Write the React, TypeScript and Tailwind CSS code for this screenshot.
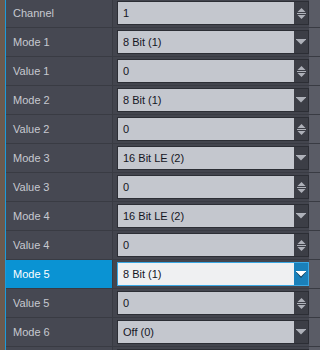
const rows: { label: string; value: string; kind: "spin" | "drop" }[] = [
  { label: "Channel", value: "1", kind: "spin" },
  { label: "Mode 1", value: "8 Bit (1)", kind: "drop" },
  { label: "Value 1", value: "0", kind: "spin" },
  { label: "Mode 2", value: "8 Bit (1)", kind: "drop" },
  { label: "Value 2", value: "0", kind: "spin" },
  { label: "Mode 3", value: "16 Bit LE (2)", kind: "drop" },
  { label: "Value 3", value: "0", kind: "spin" },
  { label: "Mode 4", value: "16 Bit LE (2)", kind: "drop" },
  { label: "Value 4", value: "0", kind: "spin" },
  { label: "Mode 5", value: "8 Bit (1)", kind: "drop" },
  { label: "Value 5", value: "0", kind: "spin" },
  { label: "Mode 6", value: "Off (0)", kind: "drop" },
  // next row is only peeking in at the bottom edge
  { label: "", value: "", kind: "spin" },
];

function SpinIcon() {
  return (
    <svg width="9" height="13" viewBox="0 0 9 13" className="block">
      <path d="M4.5 1 L8.5 5 L0.5 5 Z" fill="#aeb1b9" />
      <rect x="0" y="6" width="9" height="1" fill="#aeb1b9" />
      <path d="M0.5 8 L8.5 8 L4.5 12 Z" fill="#aeb1b9" />
    </svg>
  );
}

function DropIcon({ active }: { active?: boolean }) {
  return (
    <svg width="10" height="7" viewBox="0 0 10 7" className="block">
      {active && <path d="M0 1 L10 1 L5 7 Z" fill="#0d3550" />}
      <rect x="0" y="0" width="10" height="1" fill={active ? "#ffffff" : "#aeb1b9"} />
      <path d="M0.5 1 L9.5 1 L5 5.5 Z" fill={active ? "#ffffff" : "#aeb1b9"} />
    </svg>
  );
}

export default function App() {
  const selected = 9;
  return (
    <div
      className="w-[320px] h-[350px] overflow-hidden flex bg-[#464852]"
      style={{ fontFamily: '"Liberation Sans", Arial, sans-serif' }}
    >
      <div className="w-[5px] shrink-0 bg-[#6b5a4e]" />
      <div className="w-px shrink-0 bg-[#1f9bd8]" />
      <div className="flex-1 flex flex-col -mt-px">
        {rows.map((r, i) => {
          const active = i === selected;
          return (
            <div key={i} className="flex h-[29px] shrink-0 border-b border-[#393b43]">
              <div
                className={
                  active
                    ? "w-[106px] shrink-0 flex items-center pl-[7px] text-[11px] bg-[#0a93d3] text-white"
                    : "w-[106px] shrink-0 flex items-center pl-[7px] text-[11px] bg-[#464852] text-[#c6c8d0]"
                }
              >
                {r.label}
              </div>
              <div className="w-px shrink-0 bg-[#393b43]" />
              <div className="flex-1 flex items-center pl-[4px] bg-[#43454e]">
                <div
                  className={
                    active
                      ? "w-[192px] h-[24px] flex border border-[#3aa8e4] bg-[#eff0f2]"
                      : "w-[192px] h-[24px] flex border border-[#2c2e35] bg-[#c4c7ce]"
                  }
                >
                  <div className="flex-1 flex items-center pl-[5px] text-[11px] text-[#15151f]">
                    {r.value}
                  </div>
                  <div
                    className={
                      active
                        ? "w-[14px] shrink-0 flex items-center justify-center bg-[#1a80ba]"
                        : "w-[14px] shrink-0 flex items-center justify-center bg-[#3c3e46]"
                    }
                  >
                    {r.kind === "spin" ? <SpinIcon /> : <DropIcon active={active} />}
                  </div>
                </div>
                <div className="flex-1 self-stretch bg-[#5a5c66]" />
              </div>
            </div>
          );
        })}
      </div>
    </div>
  );
}
